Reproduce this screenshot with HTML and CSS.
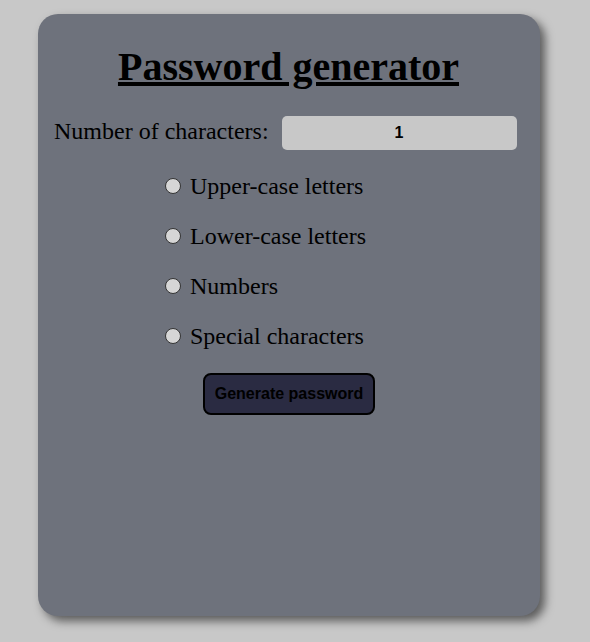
FILE: index.html
```html
<!DOCTYPE html>
<html>
<head>
<meta charset="utf-8">
<link rel="stylesheet" href="styles.css">
</head>
<body>
<main class="card">
  <h1 class="title">Password generator</h1>
  <div class="count-row">
    <label class="count-label" for="count">Number of characters:</label>
    <input class="count-input" id="count" type="text" value="1">
  </div>
  <div class="options">
    <label class="option"><input type="radio" class="radio"><span>Upper-case letters</span></label>
    <label class="option"><input type="radio" class="radio"><span>Lower-case letters</span></label>
    <label class="option"><input type="radio" class="radio"><span>Numbers</span></label>
    <label class="option"><input type="radio" class="radio"><span>Special characters</span></label>
  </div>
  <div class="actions">
    <button class="generate" type="button">Generate password</button>
  </div>
</main>
</body>
</html>
```

FILE: styles.css
```css
html, body {
  margin: 0;
  padding: 0;
}
body {
  background: #c8c8c8;
  width: 590px;
  height: 642px;
  overflow: hidden;
  font-family: "Liberation Serif", "Times New Roman", serif;
}
.card {
  box-sizing: border-box;
  width: 502px;
  height: 602px;
  margin: 14px 0 0 38px;
  background: #6e727c;
  border-radius: 20px;
  box-shadow: 5px 5px 10px rgba(0, 0, 0, 0.55);
  display: flex;
  flex-direction: column;
  align-items: center;
  padding-top: 30px;
}
.title {
  margin: 0 0 0 -1px;
  font-size: 40px;
  font-weight: bold;
  text-decoration: underline;
  line-height: 46px;
  color: #000;
}
.count-row {
  display: flex;
  align-items: center;
  gap: 13px;
  margin-top: 26px;
  width: 100%;
  padding-left: 16px;
  box-sizing: border-box;
}
.count-label {
  font-size: 24px;
  color: #000;
  position: relative;
  top: -2px;
}
.count-input {
  box-sizing: border-box;
  width: 235px;
  height: 34px;
  border: none;
  border-radius: 5px;
  background: #c8c8c8;
  text-align: center;
  font-family: "Liberation Sans", Arial, sans-serif;
  font-weight: bold;
  font-size: 16px;
  color: #000;
  padding: 0;
}
.options {
  align-self: flex-start;
  margin-left: 127px;
  margin-top: 22px;
  display: flex;
  flex-direction: column;
  gap: 22px;
}
.option {
  display: flex;
  align-items: center;
  gap: 9px;
  font-size: 24px;
  line-height: 28px;
  color: #000;
}
.radio {
  appearance: none;
  -webkit-appearance: none;
  margin: 0;
  width: 16px;
  height: 16px;
  border-radius: 50%;
  background: #d6d6d6;
  border: 1.5px solid #333;
  box-sizing: border-box;
}
.actions {
  margin-top: 23px;
}
.generate {
  box-sizing: border-box;
  width: 172px;
  height: 42px;
  background: #2a2b42;
  border: 2px solid #000;
  border-radius: 8px;
  font-family: "Liberation Sans", Arial, sans-serif;
  font-weight: bold;
  font-size: 16px;
  color: #000;
  padding: 0;
}
```
